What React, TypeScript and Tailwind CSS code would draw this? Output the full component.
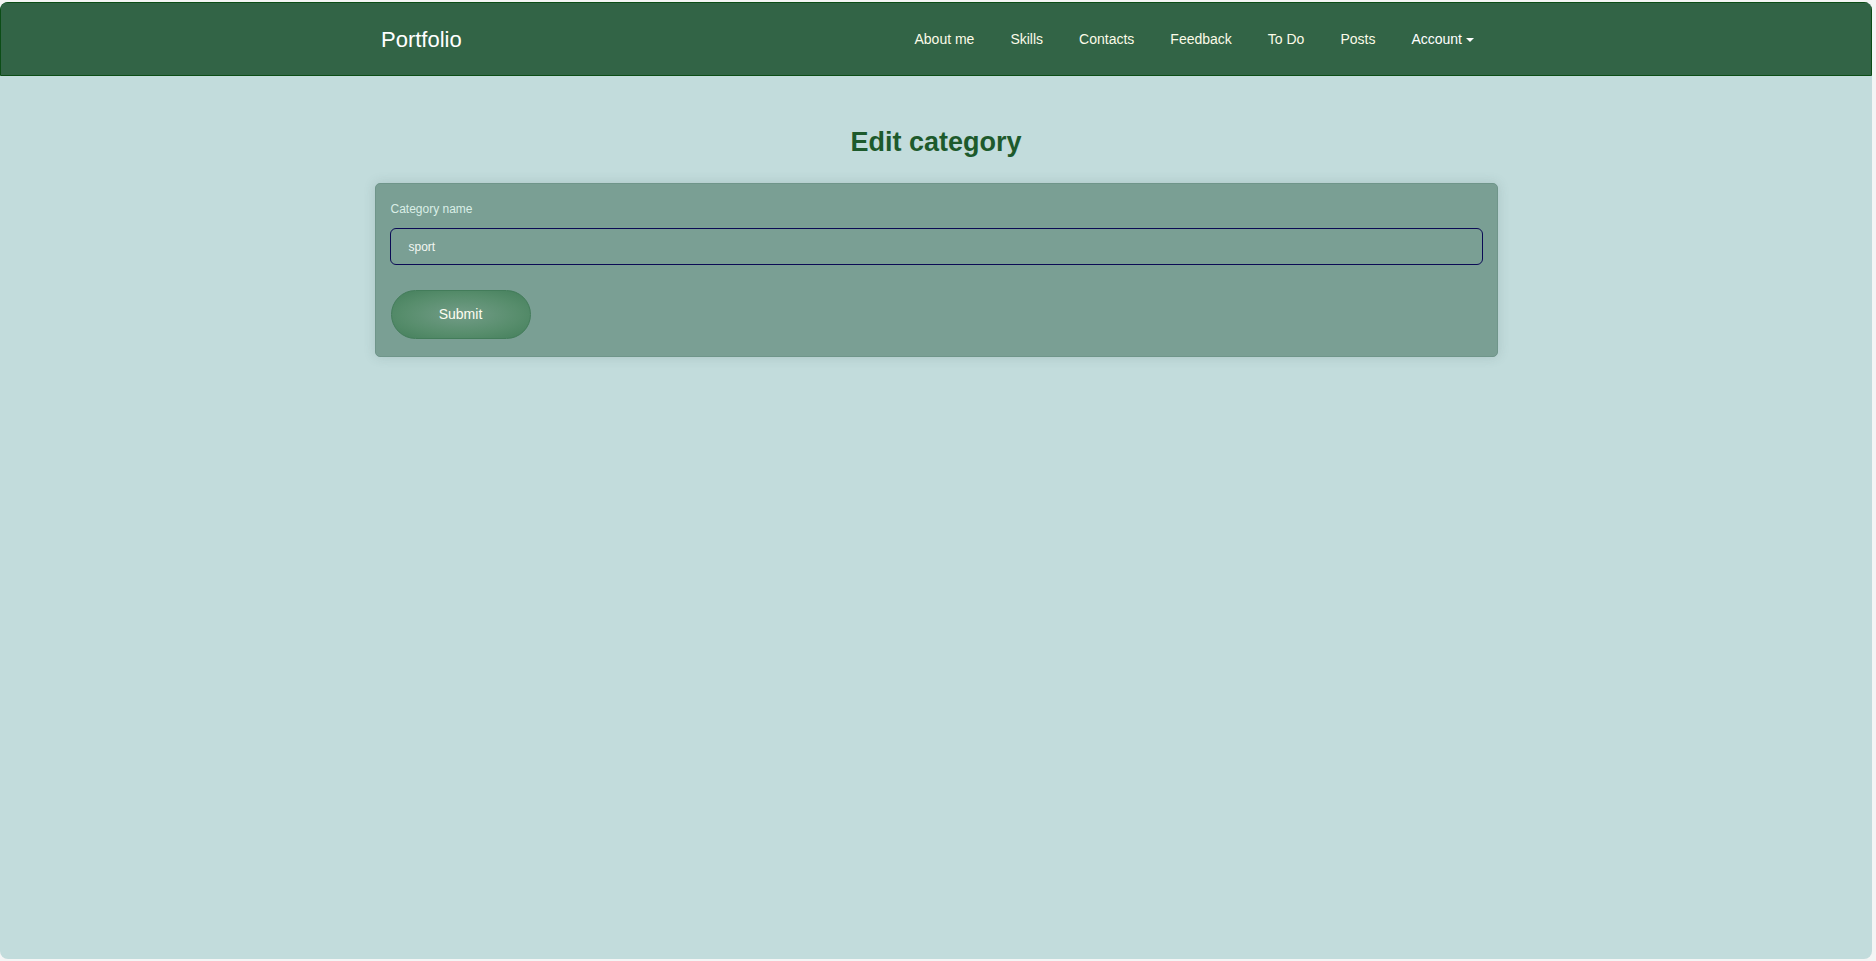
import React from "react";

const links = ["About me", "Skills", "Contacts", "Feedback", "To Do", "Posts"];

export default function App() {
  return (
    <div className="w-full h-[961px] bg-[#f4f5f5] pt-[2px] pr-[4px] pb-[2px] font-['Liberation_Sans',Arial,sans-serif]">
      <div className="h-full rounded-[8px] bg-[#c2dcdc] overflow-hidden flex flex-col">
        <nav className="h-[74px] shrink-0 bg-[#326446] border border-[#0c4d16] rounded-tl-[6px]">
          <div className="w-[1116px] mx-auto h-full flex items-center">
            <a className="ml-[3px] text-[22px] text-white">Portfolio</a>
            <ul className="ml-auto mr-[2px] flex items-center text-[14px]">
              {links.map((l) => (
                <li key={l} className="px-[18px] text-[#fbfbe8]">
                  {l}
                </li>
              ))}
              <li className="px-[18px] text-white flex items-center font-medium">
                Account
                <span className="ml-[4px] mt-[1px] w-0 h-0 border-t-[4px] border-t-white border-x-[4px] border-x-transparent" />
              </li>
            </ul>
          </div>
        </nav>

        <main className="flex flex-col items-center">
          <h1 className="mt-[51px] text-[27px] leading-[31px] font-bold text-[#1d5a2c]">Edit category</h1>
          <form className="mt-[25px] w-[1123px] bg-[#7a9f94] border border-[#6f958a] rounded-[5px] shadow-[0_0_12px_rgba(60,90,90,0.18)] px-[14px] pt-[16px] pb-[17px]">
            <label className="block ml-[1px] text-[12px] leading-[18px] text-[#d9eee6]">Category name</label>
            <div className="mt-[10px] h-[37px] border border-[#0b0b55] rounded-[6px] flex items-center pl-[18px] text-[12px] text-[#f2f7f2]">
              sport
            </div>
            <button
              type="button"
              className="mt-[25px] ml-[1px] w-[140px] h-[49px] rounded-full border border-[#437c5a] bg-[radial-gradient(ellipse_at_center,#729c87_0%,#578d6c_60%,#447f5b_100%)] text-[14px] text-[#fdfdf0] flex items-center justify-center"
            >
              Submit
            </button>
          </form>
        </main>
      </div>
    </div>
  );
}
